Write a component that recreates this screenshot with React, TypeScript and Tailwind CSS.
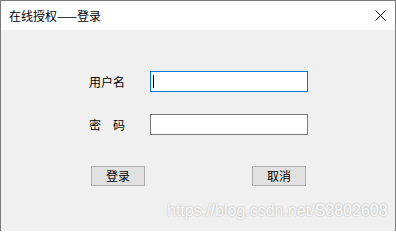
const cjk = { fontFamily: '"Noto Sans CJK SC", "Liberation Sans", sans-serif' };

export default function App() {
  return (
    <div className="w-[396px] h-[231px] overflow-hidden flex flex-col border-t border-l border-r border-[#7a7a7a] bg-[#f0f0f0]" style={cjk}>
      {/* title bar */}
      <div className="h-[29px] shrink-0 bg-white flex items-center justify-between pl-[8px] pr-[9px]">
        <span className="text-[12px] text-black leading-none">在线授权——登录</span>
        <svg width="11" height="11" viewBox="0 0 11 11" className="text-black">
          <path d="M0.5 0.5 L10.5 10.5 M10.5 0.5 L0.5 10.5" stroke="currentColor" strokeWidth="1" fill="none" />
        </svg>
      </div>

      {/* body */}
      <div className="relative flex-1 flex flex-col pt-[41px] pl-[88px]">
        <div className="flex items-center h-[21px]">
          <span className="w-[61px] text-[12px] leading-none text-black">用户名</span>
          <div className="w-[158px] h-[21px] bg-white border border-[#0078d7] flex items-center pl-[2px]">
            <span className="w-px h-[13px] bg-black" />
          </div>
        </div>
        <div className="flex items-center h-[21px] mt-[22px]">
          <span className="w-[61px] text-[12px] leading-none text-black">密　码</span>
          <div className="w-[158px] h-[21px] bg-white border border-[#7a7a7a]" />
        </div>
        <div className="flex justify-between w-[215px] ml-[2px] mt-[31px]">
          <button className="w-[54px] h-[20px] bg-[#e1e1e1] border border-[#adadad] text-[12px] leading-none text-black">登录</button>
          <button className="w-[54px] h-[20px] bg-[#e1e1e1] border border-[#adadad] text-[12px] leading-none text-black">取消</button>
        </div>
        {/* watermark */}
        <div
          className="absolute left-[166px] top-[173px] text-[16px] leading-none text-[#f8f8f8]"
          style={{ fontFamily: '"Liberation Sans", Arial, sans-serif', textShadow: '0 0 2px #a8a8a8' }}
        >
          https://blog.csdn.net/S3802608
        </div>
      </div>
    </div>
  );
}
